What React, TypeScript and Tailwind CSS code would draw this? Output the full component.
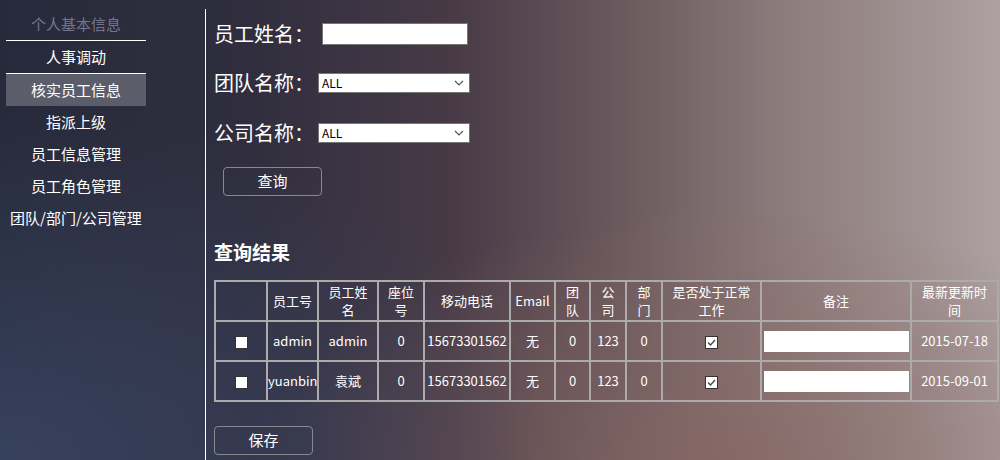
import React from "react";

const menu = ["人事调动", "核实员工信息", "指派上级", "员工信息管理", "员工角色管理", "团队/部门/公司管理"];

const cols = [52, 51, 60, 46, 86, 45, 35, 36, 36, 99, 150, 87];

const headers: React.ReactNode[] = [
  "",
  "员工号",
  <>员工姓<br />名</>,
  <>座位<br />号</>,
  "移动电话",
  "Email",
  <>团<br />队</>,
  <>公<br />司</>,
  <>部<br />门</>,
  <>是否处于正常<br />工作</>,
  "备注",
  <>最新更新时<br />间</>,
];

const rows = [
  { id: "admin", name: "admin", seat: "0", phone: "15673301562", email: "无", team: "0", company: "123", dept: "0", date: "2015-07-18" },
  { id: "yuanbin", name: "袁斌", seat: "0", phone: "15673301562", email: "无", team: "0", company: "123", dept: "0", date: "2015-09-01" },
];

function Box({ checked }: { checked?: boolean }) {
  return (
    <span className="inline-flex w-[13px] h-[13px] bg-white border border-[#333] items-center justify-center align-middle">
      {checked && (
        <svg width="9" height="9" viewBox="0 0 9 9">
          <polyline points="1,4.5 3.5,7 8,2" fill="none" stroke="#444" strokeWidth="1.3" />
        </svg>
      )}
    </span>
  );
}

function FakeSelect() {
  return (
    <div className="ml-[4px] w-[152px] h-[20px] bg-white border border-[#767676] flex items-center justify-between px-[3px]">
      <span className="text-[12px] text-black leading-none">ALL</span>
      <svg width="10" height="6" viewBox="0 0 10 6" className="mr-[2px]">
        <polyline points="1,1 5,5 9,1" fill="none" stroke="#555" strokeWidth="1.2" />
      </svg>
    </div>
  );
}

export default function App() {
  return (
    <div className="h-[460px] w-full overflow-hidden flex text-white font-['Noto_Sans_CJK_SC','Microsoft_YaHei',sans-serif] bg-[radial-gradient(ellipse_55%_75%_at_0%_100%,rgba(58,70,100,0.85),transparent),radial-gradient(ellipse_45%_55%_at_72%_100%,rgba(135,102,98,0.7),transparent),linear-gradient(to_right,#262a3a_0%,#302e3e_25%,#473a46_45%,#66555a_60%,#8c7b7b_78%,#aca0a0_100%)]">
      {/* sidebar */}
      <div className="w-[205px] shrink-0 pt-[9px] pl-[6px]">
        <div className="w-[140px] h-[32px] flex items-center justify-center text-[15px] text-[#74758a] border-b border-white">
          个人基本信息
        </div>
        {menu.map((m, i) => (
          <div
            key={m}
            className={
              "w-[140px] h-[32px] flex items-center justify-center text-[15px] whitespace-nowrap " +
              (i === 0 ? "border-b border-white h-[33px] " : "") +
              (i === 1 ? "bg-[#5c5d6a]" : "")
            }
          >
            {m}
          </div>
        ))}
      </div>

      {/* main */}
      <div className="flex-1 mt-[9px] border-l border-white pl-[8px]">
        <div className="h-[49px] flex items-center">
          <span className="text-[20px]">员工姓名：</span>
          <div className="ml-[8px] w-[146px] h-[22px] bg-white border border-[#767676]" />
        </div>
        <div className="h-[50px] flex items-center">
          <span className="text-[20px]">团队名称：</span>
          <FakeSelect />
        </div>
        <div className="h-[50px] flex items-center">
          <span className="text-[20px]">公司名称：</span>
          <FakeSelect />
        </div>
        <button className="mt-[9px] ml-[9px] w-[99px] h-[29px] border border-[#8a8790] rounded-[4px] text-[15px] text-white">
          查询
        </button>

        <h2 className="mt-[41px] h-[30px] text-[19px] font-bold leading-[30px]">查询结果</h2>

        <table className="mt-[13px] table-fixed border-collapse border-2 border-[#ababab] text-[13px] w-[783px]">
          <colgroup>
            {cols.map((w, i) => (
              <col key={i} style={{ width: w }} />
            ))}
          </colgroup>
          <thead>
            <tr className="h-[40px]">
              {headers.map((h, i) => (
                <th key={i} className="border-2 border-[#ababab] font-normal leading-[18px] p-0 text-center whitespace-nowrap">
                  {h}
                </th>
              ))}
            </tr>
          </thead>
          <tbody>
            {rows.map((r) => (
              <tr key={r.id} className="h-[40px]">
                <td className="border-2 border-[#ababab] text-center p-0"><Box /></td>
                <td className="border-2 border-[#ababab] text-center p-0 whitespace-nowrap">{r.id}</td>
                <td className="border-2 border-[#ababab] text-center p-0">{r.name}</td>
                <td className="border-2 border-[#ababab] text-center p-0">{r.seat}</td>
                <td className="border-2 border-[#ababab] text-center p-0 whitespace-nowrap">{r.phone}</td>
                <td className="border-2 border-[#ababab] text-center p-0">{r.email}</td>
                <td className="border-2 border-[#ababab] text-center p-0">{r.team}</td>
                <td className="border-2 border-[#ababab] text-center p-0">{r.company}</td>
                <td className="border-2 border-[#ababab] text-center p-0">{r.dept}</td>
                <td className="border-2 border-[#ababab] text-center p-0"><Box checked /></td>
                <td className="border-2 border-[#ababab] text-center p-0">
                  <div className="mx-auto w-[145px] h-[21px] bg-white" />
                </td>
                <td className="border-2 border-[#ababab] text-center p-0 whitespace-nowrap">{r.date}</td>
              </tr>
            ))}
          </tbody>
        </table>

        <button className="mt-[24px] w-[99px] h-[29px] border border-[#8a8790] rounded-[4px] text-[15px] text-white">
          保存
        </button>
      </div>
    </div>
  );
}
